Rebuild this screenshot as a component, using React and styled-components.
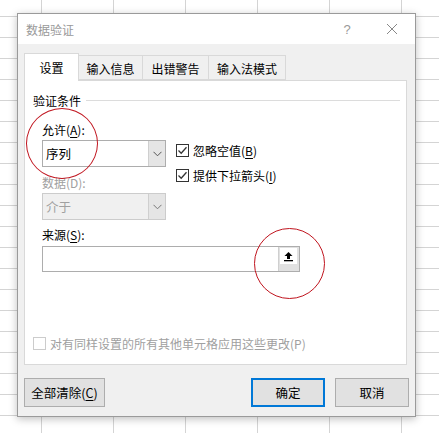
import React from "react";
import styled, { createGlobalStyle } from "styled-components";

const GlobalStyle = createGlobalStyle`
  html, body {
    margin: 0;
    padding: 0;
  }
  body {
    width: 439px;
    height: 433px;
    overflow: hidden;
    font-family: "Noto Sans CJK SC", "Noto Sans", sans-serif;
    font-size: 12px;
    color: #000;
    background-color: #fff;
    background-image:
      linear-gradient(to right, #d4d4d4 1px, transparent 1px),
      linear-gradient(to bottom, #d4d4d4 1px, transparent 1px);
    background-size: 72px 21px;
    background-position: 41px 16px;
  }
`;

const Page = styled.div`
  padding: 13px 0 0 17px;
  position: relative;
`;

const Dialog = styled.div`
  width: 397px;
  height: 402px;
  border: 1px solid #9a9a9a;
  background: #f0f0f0;
  box-shadow: 0 2px 8px rgba(0, 0, 0, 0.25);
  display: flex;
  flex-direction: column;
`;

const TitleBar = styled.div`
  height: 30px;
  background: #fff;
  display: flex;
  align-items: center;
  padding: 0 0 0 8px;
`;

const Title = styled.div`
  flex: 1;
  color: #999;
  font-size: 12px;
`;

const TitleButton = styled.div`
  width: ${(p) => p.w}px;
  display: flex;
  justify-content: center;
  align-items: center;
  color: #999;
  font-family: "Liberation Sans", sans-serif;
  font-size: 13px;
`;

const Body = styled.div`
  flex: 1;
  padding: 9px 8px 0 6px;
  display: flex;
  flex-direction: column;
`;

const Tabs = styled.div`
  display: flex;
  align-items: flex-end;
  height: 27px;
`;

const Tab = styled.div`
  width: ${(p) => p.w}px;
  height: ${(p) => (p.active ? 28 : 25)}px;
  margin-bottom: ${(p) => (p.active ? -1 : 0)}px;
  box-sizing: border-box;
  border: 1px solid #d9d9d9;
  border-bottom: ${(p) => (p.active ? "none" : "1px solid #d9d9d9")};
  border-left: ${(p) => (p.first || p.active ? "1px solid #d9d9d9" : "none")};
  background: ${(p) => (p.active ? "#fff" : "#f0f0f0")};
  display: flex;
  align-items: center;
  justify-content: center;
  font-size: 12px;
  position: relative;
  z-index: ${(p) => (p.active ? 2 : 1)};
  padding-top: ${(p) => (p.active ? 0 : 1)}px;
`;

const Panel = styled.div`
  width: 383px;
  height: 285px;
  box-sizing: border-box;
  border: 1px solid #d9d9d9;
  background: #fff;
  position: relative;
  z-index: 1;
  padding: 8px 0 0 8px;
  display: flex;
  flex-direction: column;
`;

const GroupHeader = styled.div`
  display: flex;
  align-items: center;
  gap: 5px;
  height: 22px;
  padding-right: 6px;
  &::after {
    content: "";
    flex: 1;
    height: 1px;
    background: #dcdcdc;
  }
`;

const Group = styled.div`
  padding-left: 9px;
  display: flex;
  flex-direction: column;
`;

const Label = styled.div`
  height: 18px;
  display: flex;
  align-items: center;
  color: ${(p) => (p.disabled ? "#a0a0a0" : "#000")};
  margin-top: ${(p) => p.mt || 0}px;
  margin-bottom: ${(p) => p.mb || 0}px;
  u {
    text-decoration: underline;
    text-underline-offset: 2px;
  }
`;

const Row = styled.div`
  display: flex;
  align-items: flex-start;
  gap: 10px;
  height: 27px;
`;

const Select = styled.div`
  width: 124px;
  height: 27px;
  flex-shrink: 0;
  box-sizing: border-box;
  border: 1px solid ${(p) => (p.disabled ? "#cccccc" : "#adadad")};
  background: ${(p) => (p.disabled ? "#f0f0f0" : "#fff")};
  display: flex;
  color: ${(p) => (p.disabled ? "#a0a0a0" : "#000")};
`;

const SelectValue = styled.div`
  flex: 1;
  display: flex;
  align-items: center;
  padding-left: 3px;
  font-size: 12.5px;
`;

const SelectArrow = styled.div`
  width: 16px;
  border-left: 1px solid #cfcfcf;
  background: #e5e5e5;
  display: flex;
  align-items: center;
  justify-content: center;
`;

const Checks = styled.div`
  display: flex;
  flex-direction: column;
  gap: 8px;
  padding-top: 2px;
`;

const CheckRow = styled.div`
  display: flex;
  align-items: center;
  gap: 4px;
  height: 17px;
  color: ${(p) => (p.disabled ? "#a0a0a0" : "#000")};
  u {
    text-decoration: underline;
    text-underline-offset: 2px;
  }
`;

const Box = styled.div`
  width: 13px;
  height: 13px;
  box-sizing: border-box;
  border: 1px solid ${(p) => (p.disabled ? "#cccccc" : "#333")};
  background: #fff;
  display: flex;
  align-items: center;
  justify-content: center;
`;

const SourceField = styled.div`
  width: 258px;
  height: 26px;
  box-sizing: border-box;
  border: 1px solid #adadad;
  background: #fff;
  display: flex;
  justify-content: flex-end;
`;

const PickButton = styled.div`
  width: 21px;
  background: #e1e1e1;
  border-left: 1px solid #cfcfcf;
  padding: 1px 2px 0 1px;
  box-sizing: border-box;
  display: flex;
  align-items: flex-start;
`;

const PickInner = styled.div`
  width: 17px;
  height: 16px;
  background: #fff;
  display: flex;
  align-items: center;
  justify-content: center;
`;

const ApplyAll = styled.div`
  margin-top: 63px;
`;

const Footer = styled.div`
  display: flex;
  align-items: center;
  margin-top: 13px;
  width: 385px;
`;

const Button = styled.div`
  width: ${(p) => p.w}px;
  height: 29px;
  box-sizing: border-box;
  border: ${(p) => (p.primary ? "2px solid #0078d7" : "1px solid #adadad")};
  background: #e1e1e1;
  display: flex;
  align-items: center;
  justify-content: center;
  margin-left: ${(p) => p.ml || 0}px;
  font-size: 12.5px;
  u {
    text-decoration: underline;
    text-underline-offset: 2px;
  }
`;

const Ring = styled.div`
  position: absolute;
  left: ${(p) => p.x}px;
  top: ${(p) => p.y}px;
  width: ${(p) => p.w}px;
  height: ${(p) => p.h}px;
  border: 1.5px solid #c0141e;
  border-radius: 50%;
  pointer-events: none;
  z-index: 5;
`;

const Chevron = ({ color }) => (
  <svg width="9" height="6" viewBox="0 0 9 6">
    <path d="M0.5 0.8 L4.5 4.8 L8.5 0.8" fill="none" stroke={color} strokeWidth="1" />
  </svg>
);

const Check = () => (
  <svg width="11" height="11" viewBox="0 0 11 11">
    <path d="M1.5 5.5 L4.2 8.2 L9.5 2.2" fill="none" stroke="#333" strokeWidth="1.3" />
  </svg>
);

const UpArrow = () => (
  <svg width="11" height="11" viewBox="0 0 11 11">
    <path d="M5.5 1 L9.5 5 L7 5 L7 8 L4 8 L4 5 L1.5 5 Z" fill="#000" />
    <rect x="1" y="9" width="9" height="1.3" fill="#000" />
  </svg>
);

const CloseIcon = () => (
  <svg width="12" height="12" viewBox="0 0 12 12">
    <path d="M1 1 L11 11 M11 1 L1 11" stroke="#888" strokeWidth="1" />
  </svg>
);

export default function App() {
  return (
    <>
      <GlobalStyle />
      <Page>
        <Dialog>
          <TitleBar>
            <Title>数据验证</Title>
            <TitleButton w={20}>?</TitleButton>
            <TitleButton w={22} />
            <TitleButton w={26}>
              <CloseIcon />
            </TitleButton>
            <TitleButton w={10} />
          </TitleBar>
          <Body>
            <Tabs>
              <Tab active first w={55}>设置</Tab>
              <Tab w={64}>输入信息</Tab>
              <Tab w={66}>出错警告</Tab>
              <Tab w={77}>输入法模式</Tab>
            </Tabs>
            <Panel>
              <GroupHeader>验证条件</GroupHeader>
              <Group>
                <Label mt={9} mb={2}>
                  <span>
                    允许(<u>A</u>):
                  </span>
                </Label>
                <Row>
                  <Select>
                    <SelectValue>序列</SelectValue>
                    <SelectArrow>
                      <Chevron color="#555" />
                    </SelectArrow>
                  </Select>
                  <Checks>
                    <CheckRow>
                      <Box>
                        <Check />
                      </Box>
                      <span>
                        忽略空值(<u>B</u>)
                      </span>
                    </CheckRow>
                    <CheckRow>
                      <Box>
                        <Check />
                      </Box>
                      <span>
                        提供下拉箭头(<u>I</u>)
                      </span>
                    </CheckRow>
                  </Checks>
                </Row>
                <Label disabled mt={6} mb={2}>
                  数据(D):
                </Label>
                <Select disabled>
                  <SelectValue>介于</SelectValue>
                  <SelectArrow>
                    <Chevron color="#777" />
                  </SelectArrow>
                </Select>
                <Label mt={5} mb={3}>
                  <span>
                    来源(<u>S</u>):
                  </span>
                </Label>
                <SourceField>
                  <PickButton>
                    <PickInner>
                      <UpArrow />
                    </PickInner>
                  </PickButton>
                </SourceField>
              </Group>
              <ApplyAll>
                <CheckRow disabled>
                  <Box disabled />
                  <span>对有同样设置的所有其他单元格应用这些更改(P)</span>
                </CheckRow>
              </ApplyAll>
            </Panel>
            <Footer>
              <Button w={81}>
                <span>
                  全部清除(<u>C</u>)
                </span>
              </Button>
              <Button primary w={74} ml={146}>
                确定
              </Button>
              <Button w={74} ml={10}>
                取消
              </Button>
            </Footer>
          </Body>
        </Dialog>
        <Ring x={26} y={108} w={70} h={69} />
        <Ring x={254} y={228} w={69} h={69} />
      </Page>
    </>
  );
}
